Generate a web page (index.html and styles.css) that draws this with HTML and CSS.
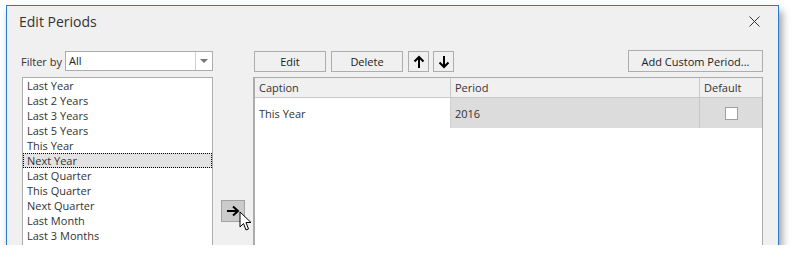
FILE: index.html
```html
<!DOCTYPE html>
<html lang="en">
<head>
    <meta charset="UTF-8">
    <title>Edit Periods</title>
    <link rel="stylesheet" href="styles.css">
</head>
<body>
    <div class="window">
        <div class="titlebar">
            <span class="title">Edit Periods</span>
            <svg class="close" width="11" height="11" viewBox="0 0 11 11">
                <path d="M0.5 0.5 L10.5 10.5 M10.5 0.5 L0.5 10.5" stroke="#333" stroke-width="1"/>
            </svg>
        </div>
        <div class="content">
            <div class="left">
                <div class="filter">
                    <span class="filter-label">Filter by</span>
                    <div class="combo">
                        <span class="combo-text">All</span>
                        <span class="combo-btn"><span class="caret"></span></span>
                    </div>
                </div>
                <ul class="list">
                    <li>Last Year</li>
                    <li>Last 2 Years</li>
                    <li>Last 3 Years</li>
                    <li>Last 5 Years</li>
                    <li>This Year</li>
                    <li class="selected">Next Year</li>
                    <li>Last Quarter</li>
                    <li>This Quarter</li>
                    <li>Next Quarter</li>
                    <li>Last Month</li>
                    <li>Last 3 Months</li>
                </ul>
            </div>
            <div class="middle">
                <div class="move-btn">
                    <svg width="14" height="12" viewBox="0 0 14 12">
                        <path d="M1 6 H12 M7 1.5 L12 6 L7 10.5" stroke="#000" stroke-width="2" fill="none"/>
                    </svg>
                </div>
                <svg class="cursor" width="14" height="21" viewBox="0 0 14 21">
                    <path d="M1 1 L1 16 L4.5 12.5 L7 19 L9.5 18 L7 11.5 L12 11.5 Z" fill="#fff" stroke="#000" stroke-width="1" stroke-linejoin="round"/>
                </svg>
            </div>
            <div class="right">
                <div class="toolbar">
                    <button class="btn btn-wide">Edit</button>
                    <button class="btn btn-wide">Delete</button>
                    <button class="btn btn-icon">
                        <svg width="12" height="14" viewBox="0 0 12 14">
                            <path d="M6 13 V2 M1.5 6.5 L6 2 L10.5 6.5" stroke="#000" stroke-width="2" fill="none"/>
                        </svg>
                    </button>
                    <button class="btn btn-icon">
                        <svg width="12" height="14" viewBox="0 0 12 14">
                            <path d="M6 1 V12 M1.5 7.5 L6 12 L10.5 7.5" stroke="#000" stroke-width="2" fill="none"/>
                        </svg>
                    </button>
                    <button class="btn btn-add">Add Custom Period...</button>
                </div>
                <div class="grid">
                    <div class="grid-row grid-head">
                        <div class="cell c-caption">Caption</div>
                        <div class="cell c-period">Period</div>
                        <div class="cell c-default">Default</div>
                    </div>
                    <div class="grid-row grid-data">
                        <div class="cell c-caption">This Year</div>
                        <div class="cell c-period focused">2016</div>
                        <div class="cell c-default focused"><span class="check"></span></div>
                    </div>
                </div>
            </div>
        </div>
    </div>
</body>
</html>
```

FILE: styles.css
```css
body {
    margin: 0;
    padding: 5px 0 0 6px;
    background-color: #fff;
    font-family: "Open Sans", "Noto Sans", sans-serif;
    font-size: 11px;
    color: #222;
    overflow: hidden;
}

.window {
    width: 771px;
    height: 239px;
    border: 1px solid #2a7ad2;
    border-bottom: none;
    background-color: #f0f0f0;
    box-shadow: 3px 6px 8px rgba(0, 0, 0, 0.4);
    overflow: hidden;
}

.titlebar {
    height: 30px;
    display: flex;
    align-items: center;
    justify-content: space-between;
    padding: 0 18px 0 12px;
}

.title {
    font-size: 14px;
    color: #333;
    padding-top: 1px;
}

.content {
    display: flex;
    padding: 15px 0 0 14px;
}

.left {
    width: 192px;
}

.filter {
    display: flex;
    align-items: center;
    height: 20px;
}

.filter-label {
    width: 44px;
    color: #333;
}

.combo {
    flex: 1;
    height: 18px;
    display: flex;
    border: 1px solid #acacac;
    background-color: #fff;
}

.combo-text {
    flex: 1;
    padding-left: 3px;
    line-height: 18px;
}

.combo-btn {
    width: 16px;
    border-left: 1px solid #d0d0d0;
    display: flex;
    align-items: center;
    justify-content: center;
}

.caret {
    width: 0;
    height: 0;
    border-left: 4px solid transparent;
    border-right: 4px solid transparent;
    border-top: 4px solid #777;
}

.list {
    list-style: none;
    margin: 6px 0 0 1px;
    padding: 0;
    height: 200px;
    background-color: #fff;
    border: 1px solid #acacac;
}

.list li {
    height: 15px;
    line-height: 15px;
    padding-left: 4px;
    color: #333;
}

.list li.selected {
    background-color: #e3e3e3;
    outline: 1px dotted #000;
    outline-offset: -1px;
}

.middle {
    width: 41px;
    position: relative;
    margin-top: 26px;
    border-right: 1px solid #acacac;
    box-sizing: border-box;
}

.move-btn {
    width: 22px;
    height: 20px;
    margin: 123px 0 0 8px;
    background-color: #cbcbcb;
    border: 1px solid #a2a2a2;
    display: flex;
    align-items: center;
    justify-content: center;
}

.cursor {
    position: absolute;
    left: 26px;
    top: 134px;
}

.right {
    width: 509px;
}

.toolbar {
    display: flex;
    height: 21px;
}

.btn {
    height: 21px;
    margin: 0 5px 0 0;
    padding: 0;
    border: 1px solid #adadad;
    background-color: #f0f0f0;
    font-family: inherit;
    font-size: 11px;
    color: #222;
    display: flex;
    align-items: center;
    justify-content: center;
}

.btn-wide {
    width: 72px;
}

.btn-icon {
    width: 21px;
    margin-right: 4px;
}

.btn-add {
    width: 135px;
    height: 22px;
    margin: -1px 0 0 auto;
}

.grid {
    margin-top: 5px;
    height: 200px;
    background-color: #fff;
    border: 1px solid #acacac;
}

.grid-row {
    display: flex;
}

.grid-head {
    height: 19px;
    background-color: #f0f0f0;
    border-bottom: 1px solid #c8c8c8;
}

.grid-data {
    height: 30px;
}

.cell {
    display: flex;
    align-items: center;
    padding-left: 4px;
    box-sizing: border-box;
    color: #333;
}

.c-caption {
    width: 195px;
}

.c-period {
    width: 249px;
    border-left: 1px solid #c8c8c8;
}

.c-default {
    flex: 1;
    border-left: 1px solid #c8c8c8;
}

.grid-data .c-period {
    border-left-color: #d0d0d0;
}

.grid-data .c-default {
    justify-content: center;
    padding-left: 0;
}

.focused {
    background-color: #dcdcdc;
}

.check {
    width: 11px;
    height: 11px;
    background-color: #fff;
    border: 1px solid #a0a0a0;
}
```
